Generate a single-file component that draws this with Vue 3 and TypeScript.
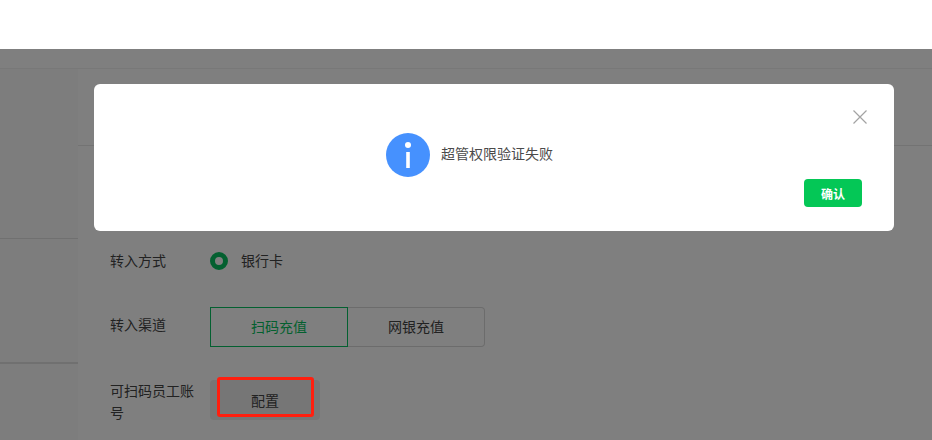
<template>
  <div class="page">
    <header class="topbar"></header>
    <div class="body">
      <aside class="sidebar">
        <div class="side-block side-block--first"></div>
        <div class="side-block side-block--second"></div>
        <div class="side-block"></div>
      </aside>
      <main class="main">
        <div class="main-head"></div>
        <form class="form" @submit.prevent>
          <div class="row row--method">
            <span class="label">转入方式</span>
            <label class="radio">
              <span class="radio__dot"></span>
              <span class="radio__text">银行卡</span>
            </label>
          </div>
          <div class="row row--channel">
            <span class="label">转入渠道</span>
            <div class="tabs">
              <button
                v-for="tab in tabs"
                :key="tab"
                type="button"
                class="tab"
                :class="{ 'tab--active': tab === activeTab }"
                @click="activeTab = tab"
              >
                {{ tab }}
              </button>
            </div>
          </div>
          <div class="row row--staff">
            <span class="label">可扫码员工账号</span>
            <button type="button" class="config">配置</button>
          </div>
        </form>
      </main>
    </div>

    <div class="mask">
      <div class="dialog">
        <button type="button" class="dialog__close" aria-label="关闭">
          <svg viewBox="0 0 14 14" fill="none" xmlns="http://www.w3.org/2000/svg">
            <path d="M0.5 0.5l13 13M13.5 0.5l-13 13" stroke="currentColor" stroke-width="1.2" />
          </svg>
        </button>
        <div class="dialog__body">
          <svg class="dialog__icon" viewBox="0 0 44 44" xmlns="http://www.w3.org/2000/svg">
            <circle cx="22" cy="22" r="22" fill="#4691fe" />
            <circle cx="22" cy="12" r="3" fill="#fff" />
            <rect x="20.2" y="19" width="3.6" height="16" fill="#fff" />
          </svg>
          <span class="dialog__text">超管权限验证失败</span>
        </div>
        <div class="dialog__foot">
          <button type="button" class="dialog__confirm">确认</button>
        </div>
      </div>
    </div>

    <!-- red annotation drawn on top of the screenshot -->
    <div class="annotation"></div>
  </div>
</template>

<script setup lang="ts">
import { ref } from "vue";

const tabs = ["扫码充值", "网银充值"];
const activeTab = ref("扫码充值");
</script>

<style>
html,
body {
  margin: 0;
  overflow: hidden;
  background: #fff;
}
</style>

<style scoped>
.page {
  position: relative;
  width: 932px;
  height: 440px;
  overflow: hidden;
  font-family: "Noto Sans CJK SC", "Noto Sans", sans-serif;
  font-size: 14px;
  color: #444;
}

.topbar {
  box-sizing: border-box;
  height: 69px;
  border-bottom: 1px solid #f0f0f0;
}

.body {
  display: flex;
  height: 371px;
}

.sidebar {
  width: 78px;
  flex-shrink: 0;
  background: #fafafa;
}

.side-block {
  box-sizing: border-box;
  border-bottom: 1px solid #e0e0e0;
}

.side-block--first {
  height: 170px;
}

.side-block--second {
  height: 124px;
}

.main {
  flex: 1;
  min-width: 0;
}

.main-head {
  box-sizing: border-box;
  height: 77px;
  border-bottom: 1px solid #e6e6e6;
}

.form {
  padding: 104px 0 0 32px;
}

.row {
  display: flex;
  align-items: flex-start;
}

.label {
  width: 90px;
  margin: -1px 10px 0 0;
  flex-shrink: 0;
  line-height: 22px;
}

.row--channel {
  margin-top: 35px;
}

.row--channel .label {
  margin-top: 6px;
}

.row--staff {
  margin-top: 33px;
}

.radio {
  display: flex;
  align-items: center;
  gap: 13px;
  height: 22px;
  line-height: 22px;
}

.radio__text {
  margin-top: -2px;
}

.radio__dot {
  box-sizing: border-box;
  width: 18px;
  height: 18px;
  border: 5px solid #07c160;
  border-radius: 50%;
  background: #fff;
}

.tabs {
  display: flex;
}

.tab {
  box-sizing: border-box;
  width: 137px;
  height: 40px;
  padding: 0 0 2px;
  border: 1px solid #d9d9d9;
  border-left: none;
  border-radius: 0 4px 4px 0;
  background: #fff;
  color: #444;
  font: inherit;
}

.tab--active {
  width: 138px;
  border: 1px solid #07c160;
  border-radius: 0;
  color: #07c160;
}

.config {
  box-sizing: border-box;
  width: 110px;
  height: 40px;
  padding: 0 0 1px;
  border: none;
  border-radius: 4px;
  background: #ececec;
  color: #444;
  font: inherit;
}

.annotation {
  position: absolute;
  top: 377px;
  left: 217px;
  box-sizing: border-box;
  width: 97px;
  height: 40px;
  border: 3px solid #ff1f0f;
  border-radius: 3px;
}

.mask {
  position: absolute;
  top: 49px;
  left: 0;
  right: 0;
  bottom: 0;
  background: rgba(0, 0, 0, 0.5);
}

.dialog {
  position: absolute;
  top: 35px;
  left: 94px;
  box-sizing: border-box;
  width: 800px;
  height: 147px;
  padding: 49px 32px 0;
  border-radius: 6px;
  background: #fff;
  display: flex;
  flex-direction: column;
}

.dialog__close {
  position: absolute;
  top: 26px;
  right: 27px;
  width: 14px;
  height: 14px;
  padding: 0;
  border: none;
  background: none;
  color: #a3a3a3;
  display: flex;
}

.dialog__close svg {
  width: 14px;
  height: 14px;
}

.dialog__body {
  display: flex;
  align-items: center;
  justify-content: center;
  gap: 11px;
  padding-right: 49px;
}

.dialog__icon {
  width: 44px;
  height: 44px;
  flex-shrink: 0;
}

.dialog__text {
  margin-top: -5px;
  line-height: 22px;
  color: #4a4a4a;
}

.dialog__foot {
  display: flex;
  justify-content: flex-end;
  margin-top: 2px;
}

.dialog__confirm {
  width: 58px;
  height: 28px;
  padding: 0;
  border: none;
  border-radius: 4px;
  background: #04c756;
  color: #fff;
  font: inherit;
  font-size: 12px;
  font-weight: 600;
}
</style>
